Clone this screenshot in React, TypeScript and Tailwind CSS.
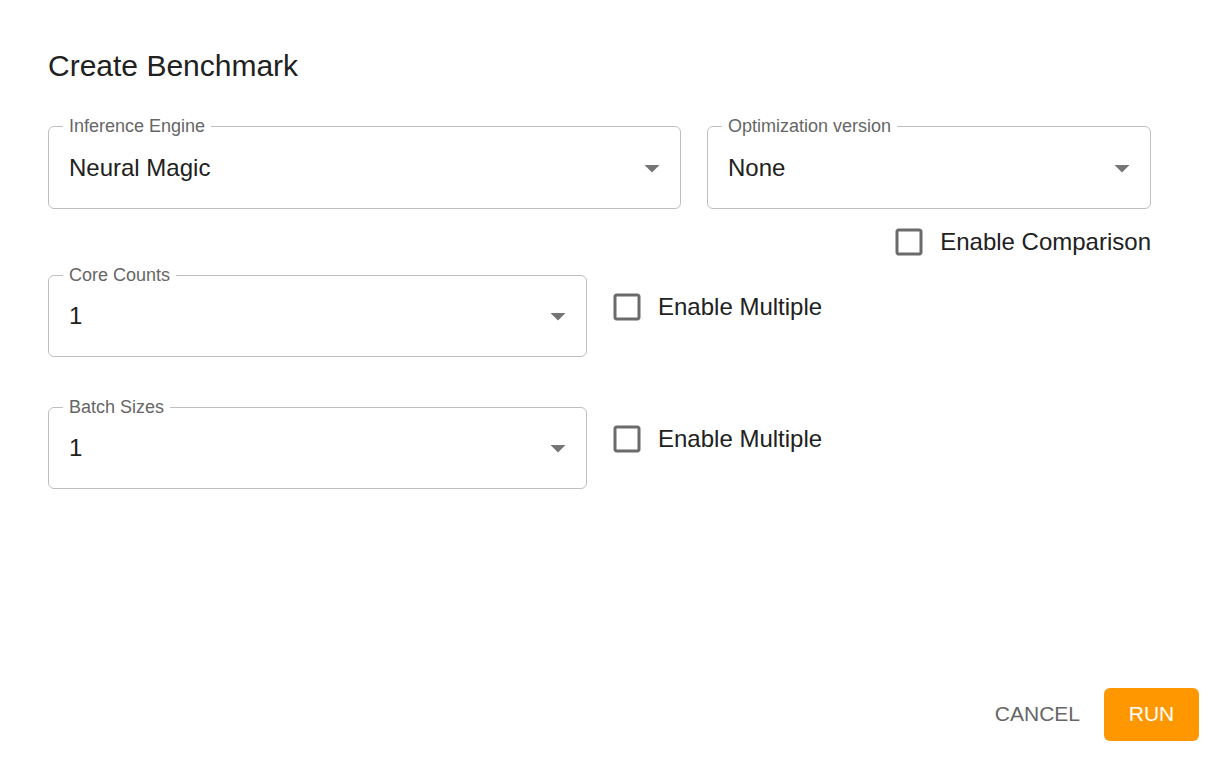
import React from "react";

function Arrow() {
  return (
    <svg viewBox="0 0 24 24" className="w-[36px] h-[36px] shrink-0" fill="#757575">
      <path d="M7 10l5 5 5-5z" />
    </svg>
  );
}

function SelectField({ label, value, width, height }: { label: string; value: string; width: string; height: string }) {
  return (
    <div className={`relative ${width} ${height} shrink-0 rounded-[6px] border border-[#bfbfbf] flex items-center pl-[20px] pr-[10px]`}>
      <span className="absolute left-[14px] top-[-10px] bg-white px-[6px] text-[18px] leading-[18px] text-[#666666] whitespace-nowrap">
        {label}
      </span>
      <span className="flex-1 text-[24px] text-[#212121]">{value}</span>
      <Arrow />
    </div>
  );
}

function CheckLabel({ label }: { label: string }) {
  return (
    <label className="flex items-center h-[63px] shrink-0">
      <span className="w-[63px] h-[63px] flex items-center justify-center">
        <svg viewBox="0 0 24 24" className="w-[36px] h-[36px]" fill="#6b6b6b">
          <path d="M19 5v14H5V5h14m0-2H5c-1.11 0-2 .9-2 2v14c0 1.1.89 2 2 2h14c1.1 0 2-.9 2-2V5c0-1.1-.9-2-2-2z" />
        </svg>
      </span>
      <span className="text-[24px] text-[#212121] whitespace-nowrap">{label}</span>
    </label>
  );
}

export default function App() {
  return (
    <div className="w-[1228px] h-[772px] bg-white flex flex-col font-['Liberation_Sans',Arial,sans-serif]">
      <h2 className="pl-12 pt-[42px] text-[30px] leading-[48px] text-[#212121]">Create Benchmark</h2>
      <div className="pl-12 mt-[36px] w-[1151px] flex flex-col">
        <div className="flex gap-[26px]">
          <SelectField label="Inference Engine" value="Neural Magic" width="w-[633px]" height="h-[83px]" />
          <SelectField label="Optimization version" value="None" width="w-[444px]" height="h-[83px]" />
        </div>
        <div className="flex justify-end mt-[1px]">
          <CheckLabel label="Enable Comparison" />
        </div>
        <div className="flex items-start gap-[8px] mt-[2px]">
          <SelectField label="Core Counts" value="1" width="w-[539px]" height="h-[82px]" />
          <CheckLabel label="Enable Multiple" />
        </div>
        <div className="flex items-start gap-[8px] mt-[50px]">
          <SelectField label="Batch Sizes" value="1" width="w-[539px]" height="h-[82px]" />
          <CheckLabel label="Enable Multiple" />
        </div>
      </div>
      <div className="mt-auto flex justify-end items-center gap-[12px] pr-[29px] pb-[31px]">
        <button className="h-[54px] px-[12px] text-[21px] font-medium text-[#666666] rounded-[6px]">
          CANCEL
        </button>
        <button className="h-[53px] w-[95px] text-[21px] font-medium text-white bg-[#ff9800] rounded-[6px]">
          RUN
        </button>
      </div>
    </div>
  );
}
